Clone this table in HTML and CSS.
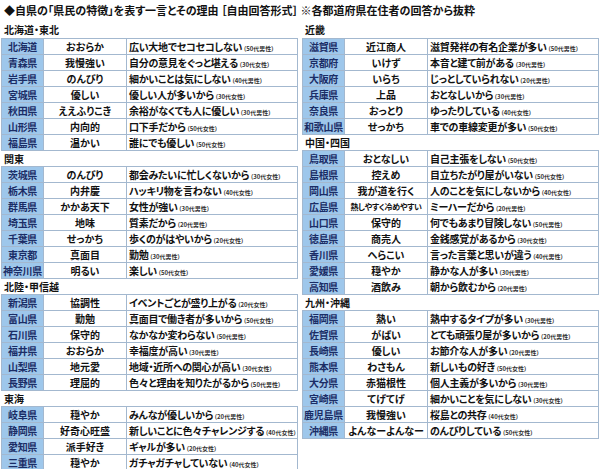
FILE: index.html
```html
<!DOCTYPE html>
<html lang="ja">
<head>
<meta charset="utf-8">
<link rel="stylesheet" href="styles.css">
</head>
<body>
<div class="page">
  <div class="title">◆自県の「県民の特徴」を表す一言とその理由 ［自由回答形式］ ※各都道府県在住者の回答から抜粋</div>
  <div class="cols">
    <div class="col">
      <div class="sec first">北海道・東北</div>
      <div class="tbl">
        <div class="row"><div class="pref">北海道</div><div class="word">おおらか</div><div class="why">広い大地でセコセコしない<span class="who">（50代男性）</span></div></div>
        <div class="row"><div class="pref">青森県</div><div class="word">我慢強い</div><div class="why">自分の意見をぐっと堪える<span class="who">（30代女性）</span></div></div>
        <div class="row"><div class="pref">岩手県</div><div class="word">のんびり</div><div class="why">細かいことは気にしない<span class="who">（40代男性）</span></div></div>
        <div class="row"><div class="pref">宮城県</div><div class="word">優しい</div><div class="why">優しい人が多いから<span class="who">（30代女性）</span></div></div>
        <div class="row"><div class="pref">秋田県</div><div class="word">ええふりこき</div><div class="why">余裕がなくても人に優しい<span class="who">（30代男性）</span></div></div>
        <div class="row"><div class="pref">山形県</div><div class="word">内向的</div><div class="why">口下手だから<span class="who">（50代女性）</span></div></div>
        <div class="row"><div class="pref">福島県</div><div class="word">温かい</div><div class="why">誰にでも優しい<span class="who">（50代女性）</span></div></div>
      </div>
      <div class="sec">関東</div>
      <div class="tbl">
        <div class="row"><div class="pref">茨城県</div><div class="word">のんびり</div><div class="why">都会みたいに忙しくないから<span class="who">（30代女性）</span></div></div>
        <div class="row"><div class="pref">栃木県</div><div class="word">内弁慶</div><div class="why">ハッキリ物を言わない<span class="who">（40代女性）</span></div></div>
        <div class="row"><div class="pref">群馬県</div><div class="word">かかあ天下</div><div class="why">女性が強い<span class="who">（30代男性）</span></div></div>
        <div class="row"><div class="pref">埼玉県</div><div class="word">地味</div><div class="why">質素だから<span class="who">（20代男性）</span></div></div>
        <div class="row"><div class="pref">千葉県</div><div class="word">せっかち</div><div class="why">歩くのがはやいから<span class="who">（20代女性）</span></div></div>
        <div class="row"><div class="pref">東京都</div><div class="word">真面目</div><div class="why">勤勉<span class="who">（30代男性）</span></div></div>
        <div class="row"><div class="pref">神奈川県</div><div class="word">明るい</div><div class="why">楽しい<span class="who">（50代女性）</span></div></div>
      </div>
      <div class="sec">北陸・甲信越</div>
      <div class="tbl">
        <div class="row"><div class="pref">新潟県</div><div class="word">協調性</div><div class="why">イベントごとが盛り上がる<span class="who">（20代女性）</span></div></div>
        <div class="row"><div class="pref">富山県</div><div class="word">勤勉</div><div class="why">真面目で働き者が多いから<span class="who">（50代女性）</span></div></div>
        <div class="row"><div class="pref">石川県</div><div class="word">保守的</div><div class="why">なかなか変わらない<span class="who">（50代男性）</span></div></div>
        <div class="row"><div class="pref">福井県</div><div class="word">おおらか</div><div class="why">幸福度が高い<span class="who">（30代男性）</span></div></div>
        <div class="row"><div class="pref">山梨県</div><div class="word">地元愛</div><div class="why">地域・近所への関心が高い<span class="who">（30代女性）</span></div></div>
        <div class="row"><div class="pref">長野県</div><div class="word">理屈的</div><div class="why">色々と理由を知りたがるから<span class="who">（50代男性）</span></div></div>
      </div>
      <div class="sec">東海</div>
      <div class="tbl">
        <div class="row"><div class="pref">岐阜県</div><div class="word">穏やか</div><div class="why">みんなが優しいから<span class="who">（20代男性）</span></div></div>
        <div class="row"><div class="pref">静岡県</div><div class="word">好奇心旺盛</div><div class="why">新しいことに色々チャレンジする<span class="who">（40代女性）</span></div></div>
        <div class="row"><div class="pref">愛知県</div><div class="word">派手好き</div><div class="why">ギャルが多い<span class="who">（20代女性）</span></div></div>
        <div class="row"><div class="pref">三重県</div><div class="word">穏やか</div><div class="why">ガチャガチャしていない<span class="who">（40代女性）</span></div></div>
      </div>
    </div>
    <div class="col">
      <div class="sec first">近畿</div>
      <div class="tbl">
        <div class="row"><div class="pref">滋賀県</div><div class="word">近江商人</div><div class="why">滋賀発祥の有名企業が多い<span class="who">（50代男性）</span></div></div>
        <div class="row"><div class="pref">京都府</div><div class="word">いけず</div><div class="why">本音と建て前がある<span class="who">（30代男性）</span></div></div>
        <div class="row"><div class="pref">大阪府</div><div class="word">いらち</div><div class="why">じっとしていられない<span class="who">（20代男性）</span></div></div>
        <div class="row"><div class="pref">兵庫県</div><div class="word">上品</div><div class="why">おとなしいから<span class="who">（30代男性）</span></div></div>
        <div class="row"><div class="pref">奈良県</div><div class="word">おっとり</div><div class="why">ゆったりしている<span class="who">（40代女性）</span></div></div>
        <div class="row"><div class="pref">和歌山県</div><div class="word">せっかち</div><div class="why">車での車線変更が多い<span class="who">（50代女性）</span></div></div>
      </div>
      <div class="sec">中国・四国</div>
      <div class="tbl">
        <div class="row"><div class="pref">鳥取県</div><div class="word">おとなしい</div><div class="why">自己主張をしない<span class="who">（50代女性）</span></div></div>
        <div class="row"><div class="pref">島根県</div><div class="word">控えめ</div><div class="why">目立ちたがり屋がいない<span class="who">（50代女性）</span></div></div>
        <div class="row"><div class="pref">岡山県</div><div class="word">我が道を行く</div><div class="why">人のことを気にしないから<span class="who">（40代女性）</span></div></div>
        <div class="row"><div class="pref">広島県</div><div class="word small">熱しやすく冷めやすい</div><div class="why">ミーハーだから<span class="who">（20代男性）</span></div></div>
        <div class="row"><div class="pref">山口県</div><div class="word">保守的</div><div class="why">何でもあまり冒険しない<span class="who">（50代男性）</span></div></div>
        <div class="row"><div class="pref">徳島県</div><div class="word">商売人</div><div class="why">金銭感覚があるから<span class="who">（30代女性）</span></div></div>
        <div class="row"><div class="pref">香川県</div><div class="word">へらこい</div><div class="why">言った言葉と思いが違う<span class="who">（40代男性）</span></div></div>
        <div class="row"><div class="pref">愛媛県</div><div class="word">穏やか</div><div class="why">静かな人が多い<span class="who">（30代男性）</span></div></div>
        <div class="row"><div class="pref">高知県</div><div class="word">酒飲み</div><div class="why">朝から飲むから<span class="who">（20代男性）</span></div></div>
      </div>
      <div class="sec">九州・沖縄</div>
      <div class="tbl">
        <div class="row"><div class="pref">福岡県</div><div class="word">熱い</div><div class="why">熱中するタイプが多い<span class="who">（30代男性）</span></div></div>
        <div class="row"><div class="pref">佐賀県</div><div class="word">がばい</div><div class="why">とても頑張り屋が多いから<span class="who">（20代男性）</span></div></div>
        <div class="row"><div class="pref">長崎県</div><div class="word">優しい</div><div class="why">お節介な人が多い<span class="who">（20代男性）</span></div></div>
        <div class="row"><div class="pref">熊本県</div><div class="word">わさもん</div><div class="why">新しいもの好き<span class="who">（50代女性）</span></div></div>
        <div class="row"><div class="pref">大分県</div><div class="word">赤猫根性</div><div class="why">個人主義が多いから<span class="who">（30代男性）</span></div></div>
        <div class="row"><div class="pref">宮崎県</div><div class="word">てげてげ</div><div class="why">細かいことを気にしない<span class="who">（30代女性）</span></div></div>
        <div class="row"><div class="pref">鹿児島県</div><div class="word">我慢強い</div><div class="why">桜島との共存<span class="who">（40代女性）</span></div></div>
        <div class="row"><div class="pref">沖縄県</div><div class="word">よんなーよんなー</div><div class="why">のんびりしている<span class="who">（50代女性）</span></div></div>
      </div>
    </div>
  </div>
</div>
</body>
</html>
```

FILE: styles.css
```css
html, body {
  margin: 0;
  padding: 0;
  background: #ffffff;
  overflow: hidden;
}

body {
  font-family: "Noto Sans CJK JP", "Noto Sans", sans-serif;
  color: #111111;
}

.page {
  width: 600px;
  height: 469px;
  overflow: hidden;
}

.title {
  height: 22px;
  line-height: 20px;
  padding-left: 4px;
  font-size: 11px;
  font-weight: bold;
  white-space: nowrap;
  font-feature-settings: "palt";
}

.cols {
  display: flex;
  gap: 4px;
  padding-left: 1px;
}

.col {
  width: 297px;
}

.sec {
  height: 15px;
  line-height: 15px;
  padding-left: 3px;
  font-size: 10px;
  font-weight: bold;
  font-feature-settings: "palt";
  overflow: hidden;
}

.sec.first {
  height: 16px;
}

.tbl {
  width: 297px;
  box-sizing: border-box;
  border: 1px solid #a3b8cf;
  border-bottom: none;
}

.row {
  display: grid;
  grid-template-columns: 42px 83px 1fr;
  height: 16px;
  box-sizing: border-box;
  border-bottom: 1px solid #a3b8cf;
  font-size: 10px;
  font-weight: bold;
  line-height: 15px;
  font-feature-settings: "palt";
}

.row > div {
  height: 15px;
  overflow: hidden;
  white-space: nowrap;
}

.pref {
  background: #9ec7eb;
  color: #1b2d66;
  text-align: center;
  letter-spacing: -0.3px;
  border-right: 1px solid #a3b8cf;
}

.word {
  text-align: center;
  border-right: 1px solid #a3b8cf;
}

.word.small {
  font-size: 8px;
  letter-spacing: -0.3px;
}

.why {
  padding-left: 2px;
  letter-spacing: -0.25px;
}

.who {
  font-size: 6px;
  font-weight: bold;
  color: #333333;
  letter-spacing: 0;
  margin-left: 1px;
}
```
